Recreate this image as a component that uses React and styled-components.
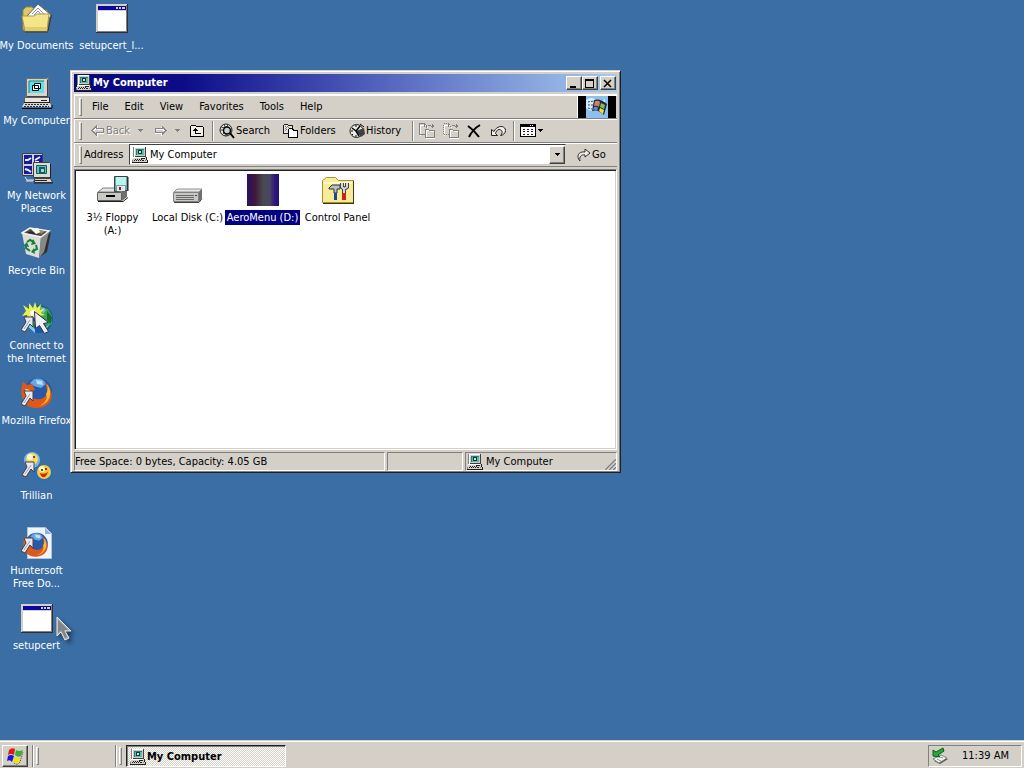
import React from "react";
import styled, { createGlobalStyle, css } from "styled-components";

const GlobalStyle = createGlobalStyle`
  * {
    box-sizing: border-box;
  }

  body {
    margin: 0;
    background: #3a6ea5;
  }

  body, button, select {
    font-family: "DejaVu Sans Condensed", "Noto Sans", sans-serif;
    font-size: 11px;
    line-height: 13px;
    color: #000;
  }

  button, select {
    margin: 0;
    padding: 0;
    border: 0;
    border-radius: 0;
    background: none;
  }

  svg {
    display: block;
    flex: none;
  }
`;

const raised = css`
  border: 1px solid;
  border-color: #fff #404040 #404040 #fff;
  box-shadow: inset -1px -1px 0 #808080;
  background: #d4d0c8;
`;

const sunken = css`
  border: 1px solid;
  border-color: #808080 #fff #fff #808080;
`;

/* ---------- desktop ---------- */

const Screen = styled.div`
  display: flex;
  flex-direction: column;
  height: 100vh;
  overflow: hidden;
`;

const Desktop = styled.main`
  position: relative;
  flex: 1;
  min-height: 0;
  background: #3a6ea5;
`;

const IconGrid = styled.div`
  display: grid;
  height: 100%;
  grid-template-rows: repeat(auto-fill, 75px);
  grid-auto-columns: 75px;
  grid-auto-flow: column;
  margin-left: -1px;
`;

const Shortcut = styled.button`
  display: flex;
  flex-direction: column;
  align-items: center;
  gap: 4px;
  padding-top: 2px;
`;

const Caption = styled.span`
  padding: 1px 2px;
  white-space: pre;
  text-align: center;
  color: ${(p) => (p.$light || p.$selected ? "#fff" : "#000")};
  background: ${(p) => (p.$selected ? "#000080" : "transparent")};
`;

const Pointer = styled.div`
  position: absolute;
  left: 56px;
  top: 616px;
  filter: drop-shadow(3px 3px 2px rgba(0, 0, 0, 0.45));
`;

/* ---------- window ---------- */

const Window = styled.section`
  position: absolute;
  inset: 70px 403px 267px 70px;
  display: flex;
  flex-direction: column;
  padding: 3px 3px 1px;
  border: 1px solid;
  border-color: #d4d0c8 #202020 #202020 #d4d0c8;
  box-shadow: inset 1px 1px 0 #fff, inset -1px -1px 0 #808080;
  background: #d4d0c8;
`;

const TitleBar = styled.header`
  display: flex;
  align-items: center;
  height: 18px;
  padding: 0 1px 0 2px;
  color: #fff;
  background: linear-gradient(to right, #08087c, #0c0c88 20%, #5060bc 55%, #a6caf0);
`;

const Title = styled.h1`
  flex: 1;
  margin: 0 0 0 1px;
  font: bold 11px/14px "DejaVu Sans Condensed", "Noto Sans", sans-serif;
`;

const CaptionButton = styled.button`
  ${raised}
  display: grid;
  place-items: center;
  width: 16px;
  height: 14px;
  margin-left: ${(p) => (p.$apart ? "2px" : "0")};
`;

const Rebar = styled.div`
  margin: 2px 0;
  border-top: 1px solid #fff;
`;

const Band = styled.div`
  display: flex;
  align-items: center;
  height: 24px;
  padding-left: 5px;
  border-bottom: 1px solid #808080;
  box-shadow: inset 1px 1px 0 #fff;
`;

const Grip = styled.span`
  flex: none;
  width: 3px;
  height: 18px;
  border: 1px solid;
  border-color: #fff #808080 #808080 #fff;
`;

const MenuBar = styled.nav`
  display: flex;
  flex: 1;
  padding-left: 2px;
`;

const MenuItem = styled.button`
  padding: 2px 8px;
`;

const Throbber = styled.div`
  display: flex;
  justify-content: center;
  width: 39px;
  height: 22px;
  margin-right: 1px;
  border-left: 1px solid #fff;
  background: #000;
`;

const ToolStrip = styled.div`
  display: flex;
  align-items: center;
  padding-left: 5px;
`;

const ToolButton = styled.button`
  display: flex;
  align-items: center;
  gap: 1px;
  height: 20px;
  min-width: ${(p) => p.$width}px;
  padding-left: 4px;
  white-space: nowrap;
  color: ${(p) => (p.disabled ? "#808080" : "#000")};
  text-shadow: ${(p) => (p.disabled ? "1px 1px 0 #fff" : "none")};
`;

const Divider = styled.span`
  width: 2px;
  height: 20px;
  margin-right: 1px;
  border-left: 1px solid #808080;
  border-right: 1px solid #fff;
`;

const AddressLabel = styled.label`
  width: 47px;
  padding-left: 2px;
`;

const Combo = styled.div`
  display: grid;
  flex: 1;
  align-items: center;
  height: 21px;
  border: 1px solid;
  border-color: #404040 #d4d0c8 #d4d0c8 #404040;
  background: #fff;

  > * {
    grid-area: 1 / 1;
  }

  > svg {
    margin-left: 2px;
    pointer-events: none;
  }
`;

const AddressSelect = styled.select`
  width: 100%;
  height: 100%;
  padding-left: 20px;
  appearance: none;
`;

const ComboArrow = styled.span`
  ${raised}
  display: grid;
  place-items: center;
  justify-self: end;
  width: 16px;
  height: 18px;
  pointer-events: none;
`;

const GoButton = styled.button`
  display: flex;
  align-items: center;
  gap: 1px;
  width: 51px;
  padding-left: 11px;
`;

const FileArea = styled.div`
  display: flex;
  flex: 1;
  flex-wrap: wrap;
  align-content: flex-start;
  min-height: 0;
  border: 1px solid;
  border-color: #808080 #fff #fff #808080;
  box-shadow: inset 1px 1px 0 #202020, inset -1px -1px 0 #d4d0c8;
  background: #fff;
`;

const FileItem = styled.button`
  display: flex;
  flex-direction: column;
  align-items: center;
  gap: 4px;
  width: 75px;
  padding-top: 4px;
`;

const StatusBar = styled.footer`
  display: grid;
  grid-template-columns: 1fr 76px 152px;
  gap: 2px;
  height: 19px;
  margin-top: 2px;
`;

const StatusCell = styled.div`
  ${sunken}
  display: flex;
  align-items: center;
  gap: 3px;
  overflow: hidden;
  white-space: nowrap;

  > svg:first-child {
    margin-left: 1px;
  }

  > svg:last-child {
    margin-left: auto;
    align-self: flex-end;
  }
`;

/* ---------- taskbar ---------- */

const Taskbar = styled.footer`
  display: flex;
  align-items: center;
  height: 28px;
  padding: 3px 2px 1px;
  border-top: 1px solid #d4d0c8;
  box-shadow: inset 0 1px 0 #fff;
  background: #d4d0c8;
`;

const StartButton = styled.button`
  ${raised}
  display: grid;
  place-items: center;
  width: 26px;
  height: 22px;
`;

const QuickLaunch = styled.div`
  display: flex;
  align-items: center;
  gap: 2px;
  width: 87px;
  padding-left: 4px;
`;

const TaskList = styled.div`
  display: flex;
  flex: 1;
  align-items: center;
  gap: 2px;
`;

const Groove = styled.span`
  width: 2px;
  height: 22px;
  border-left: 1px solid #808080;
  border-right: 1px solid #fff;
`;

const TaskButton = styled.button`
  display: flex;
  align-items: center;
  gap: 1px;
  width: 160px;
  height: 22px;
  margin-left: 2px;
  padding: 2px 3px 0;
  border: 1px solid;
  border-color: #202020 #fff #fff #202020;
  box-shadow: inset 1px 1px 0 #808080;
  background: repeating-conic-gradient(#fff 0 25%, #d4d0c8 0 50%) 0 0 / 2px 2px;
  font-weight: bold;
`;

const Tray = styled.div`
  ${sunken}
  display: flex;
  align-items: center;
  justify-content: space-between;
  width: 94px;
  height: 22px;
  padding: 0 12px 0 2px;
`;

/* ---------- small icons ---------- */

const Icon = ({ w = 16, h = 16, children }) => (
  <svg
    width={w}
    height={h}
    viewBox={`0 0 ${w} ${h}`}
    shapeRendering="crispEdges"
    fill="none"
    aria-hidden="true"
  >
    {children}
  </svg>
);

const SmallPc = () => (
  <Icon>
    <path fill="#c8ccc8" d="M2 0h11v10H2z" />
    <path fill="#808080" d="M1 0h1v10H1z" />
    <path fill="#fff" d="M2 0h11v1H2zM2 1h1v9H2z" />
    <path fill="#404040" d="M13 0h1v10h-1zM3 9h10v1H3z" />
    <path fill="#58c0a8" d="M4 2h8v6H4z" />
    <path fill="#387870" d="M4 2h8v1H4zM4 2h1v6H4z" />
    <path fill="#103830" d="M6 3h4v4H6z" />
    <path fill="#a8f0e0" d="M7 4h2v2H7z" />
    <path fill="#d4d0c8" d="M1 10h13v3H1zM0 12h15v3H0z" />
    <path fill="#fff" d="M1 10h12v1H1z" />
    <path
      fill="#202020"
      d="M14 10h1v3h-1zM9 11h4v1H9zM2 13h1v1H2zM4 13h1v1H4zM6 13h1v1H6zM8 13h1v1H8zM10 13h2v1h-2zM3 12h1v1H3zM5 12h1v1H5zM7 12h1v1H7zM9 12h1v1H9zM0 15h16v1H0zM15 13h1v2h-1z"
    />
    <path fill="#808080" d="M0 13h1v2H0zM13 13h1v1h-1z" />
  </Icon>
);

const Caret = ({ color = "#000" }) => (
  <Icon w={7} h={4}>
    <path fill={color} d="M1 0h5v1H1zM2 1h3v1H2zM3 2h1v1H3z" />
  </Icon>
);

const Arrow = ({ flip }) => (
  <Icon w={14} h={12}>
    <g transform={flip ? "translate(13 0) scale(-1 1)" : undefined}>
      <path stroke="#fff" d="M2 6.500l4-4v2h6v4H6v2z" />
      <path stroke="#858585" d="M1 5.500l4-4v2h7v4H5v2z" />
    </g>
  </Icon>
);

const UpFolder = () => (
  <Icon>
    <path stroke="#000" fill="#f0eee8" d="M1.500 13.500h13v-9l-1-1h-6l-1-1h-4l-1 1z" />
    <path fill="#000" d="M6 5h1v5H6zM5 6h3v1H5zM4 7h5v1H4zM6 10h6v1H6z" />
  </Icon>
);

const SearchIcon = () => (
  <svg width="16" height="16" viewBox="0 0 16 16" fill="none" aria-hidden="true">
    <circle cx="7" cy="7" r="6" stroke="#202020" fill="#e4e2dc" />
    <path d="M1 7h4M2 4l4 1M5 1l1 3M9 1L8 4M3 12l3-3M7 13v-2" stroke="#404040" />
    <circle cx="8" cy="7.500" r="3.500" stroke="#000" strokeWidth="1.500" fill="#c8d0d0" />
    <path d="M11 10l4 5" stroke="#000" strokeWidth="2" />
  </svg>
);

const FoldersIcon = () => (
  <Icon>
    <path stroke="#202020" fill="#e4e2dc" d="M.5 10.500v-8l1-1h3l1 1h4v8z" />
    <path stroke="#000" fill="#fff" d="M5.500 14.500v-8l1-1h3l1 2h4v7z" />
    <path
      fill="#808080"
      d="M2 3h1v1H2zM4 3h1v1H4zM3 4h1v1H3zM5 4h1v1H5zM2 5h1v1H2zM3 6h1v1H3zM2 7h1v1H2z"
    />
  </Icon>
);

const HistoryIcon = () => (
  <svg width="16" height="16" viewBox="0 0 16 16" fill="none" aria-hidden="true">
    <circle cx="7.500" cy="8" r="6.500" fill="#ecece8" stroke="#202020" />
    <path d="M7 8l8-3 1 6-4 3z" fill="#404040" />
    <path d="M7 8l4-5M7 8L3 5M7 8l3 5" stroke="#000" strokeWidth="1.500" />
    <path d="M7 2v2M2 8h2M7 12v2M3 12l1-1" stroke="#000" />
    <path d="M11 1l4 3" stroke="#000" />
  </svg>
);

const MoveTo = ({ copy }) => (
  <Icon>
    <path stroke="#fff" d="M1.500 12.500v-10h5l3 3M7.500 15.500v-8h3l1 1h5v7z" />
    <path
      stroke="#808080"
      strokeDasharray={copy ? "1 1" : undefined}
      d="M5.500 11.500h-5v-11h5l2 2v2"
    />
    <path stroke="#808080" d="M6.500 14.500v-8h3l1 1h5v7z" />
    <path fill="#808080" d="M9 2h3v1H9zM14 2h1v1h-1zM13 1h1v4h-1zM12 3h3v1h-3zM5 1h1v3H5z" />
  </Icon>
);

const DeleteIcon = () => (
  <svg width="15" height="14" viewBox="0 0 15 14" aria-hidden="true">
    <path d="M1 2q6 4 11 11M13 1Q6 5 2 13" fill="none" stroke="#000" strokeWidth="2" />
  </svg>
);

const UndoIcon = () => (
  <svg width="16" height="14" viewBox="0 0 16 14" fill="none" aria-hidden="true">
    <path
      d="M.5 5.500v6h6l-2-2c1-4 4-5 6-3 1 1 1 3-1 5 2 0 5-2 5-5 0-5-8-6-11.500 1z"
      fill="#f2f0ec"
      stroke="#202020"
    />
  </svg>
);

const ViewsIcon = () => (
  <Icon>
    <path stroke="#000" fill="#fff" d="M.5 1.500h15v12H.5z" />
    <path fill="#000" d="M1 2h14v2H1z" />
    <path
      fill="#202020"
      d="M3 6h2v1H3zM7 6h2v1H7zM11 6h2v1h-2zM3 8h2v1H3zM7 8h2v1H7zM11 8h2v1h-2zM3 11h2v1H3zM7 11h2v1H7zM11 11h2v1h-2z"
    />
    <path fill="#fff" d="M10 2h1v1h-1zM12 2h1v1h-1z" />
  </Icon>
);

const GoIcon = () => (
  <svg width="14" height="14" viewBox="0 0 14 14" aria-hidden="true">
    <path
      d="M3 13C-1 9 1 3 8 4V1l5 4-5 4V7C4 6 2 9 3 13z"
      fill="#f0eeea"
      stroke="#303030"
    />
  </svg>
);

const WindowsFlag = () => (
  <svg width="18" height="18" viewBox="0 0 18 18" aria-hidden="true">
    <path fill="#e01818" d="M3 3q3-3 6-1L8 8Q5 6 2 8z" />
    <path fill="#38b038" d="M10 3q3 2 7 0l-2 6q-3 2-6-1z" />
    <path fill="#1818d8" d="M2 9q3-2 6 0l-2 6q-2-3-5-1z" />
    <path fill="#f0e010" d="M9 10q3 2 6 0l-2 5q-3 3-6 0z" />
    <path fill="none" stroke="#404040" strokeDasharray="1 1" d="M8 16q3 3 6-1l3-10" />
  </svg>
);

const ThrobberFlag = () => (
  <svg width="22" height="22" viewBox="0 0 22 22" aria-hidden="true">
    <path fill="#8cc0ee" d="M0 0h22v22H0z" />
    <path fill="#d8ecfa" d="M0 4q6-4 10 0t9-1v6q-7 3-11 5T0 12z" />
    <path fill="#202838" d="M8 4q6-2 13 4l-3 11q-6-6-12-4z" />
    <path fill="#d08068" d="M9 5q4-1 5 1l-1 5q-2-2-5-1z" />
    <path fill="#88bc58" d="M15 7l4 2-1 4-4-2z" />
    <path fill="#6088d8" d="M8 11q3-1 4 1l-1 3q-2-2-4-1z" />
    <path fill="#f0e030" d="M14 12l4 2-1 4-4-3z" />
    <path stroke="#404858" strokeDasharray="2 1" d="M2 6l6-1M2 9l5 0M2 12l4 1" />
  </svg>
);

const SizeGrip = () => (
  <svg width="12" height="12" viewBox="0 0 12 12" aria-hidden="true">
    <path stroke="#fff" d="M0 12L12 0M4 12l8-8M8 12l4-4" />
    <path stroke="#808080" strokeWidth="1.500" d="M1 12L12 1M5 12l7-7M9 12l3-3" />
  </svg>
);

const TrayIcon = () => (
  <svg width="18" height="18" viewBox="0 0 18 18" aria-hidden="true">
    <path fill="#505050" d="M3 14l8-4 6 2-8 5z" />
    <path fill="#f4f4f4" stroke="#808080" d="M2 12l8-4 6 3-8 5z" />
    <path stroke="#909090" d="M6 12l4 2M9 10l3 1" />
    <path fill="#28a838" stroke="#086018" d="M12 1L5 5 2 3v6l7 1-2-2 6-4z" />
  </svg>
);

/* ---------- large icons ---------- */

const Large = ({ children, crisp }) => (
  <svg
    width="32"
    height="32"
    viewBox="0 0 32 32"
    fill="none"
    shapeRendering={crisp ? "crispEdges" : undefined}
    aria-hidden="true"
  >
    {children}
  </svg>
);

const DocumentsIcon = () => (
  <Large>
    <path fill="#e0c868" stroke="#a08830" d="M2 28V8l3-3h6l3 3h12v20z" />
    <path fill="#fff" stroke="#606060" d="M6 14L17 2l13 11-4 8H10z" />
    <path stroke="#7890b8" d="M11 12l6-6 8 8M13 13l4-4 5 6" />
    <path fill="#f4e48c" stroke="#b09840" d="M1 14h12l3-2h12l-2 17H4z" />
    <path fill="#e4cc68" d="M4 25h22v4H4z" />
    <path stroke="#403818" d="M4 30h23M30.500 13L27 29" />
  </Large>
);

const AppWindowIcon = () => (
  <Large crisp>
    <path fill="#d4d0c8" d="M0 2h32v28H0z" />
    <path fill="#303030" d="M31 2h1v29h-1zM0 30h32v1H0z" />
    <path fill="#808080" d="M30 3h1v27h-1zM1 29h30v1H1z" />
    <path fill="#0808a0" d="M2 4h28v4H2z" />
    <path fill="#d4d0c8" d="M20 5h2v2h-2zM23 5h2v2h-2zM26 5h3v2h-3z" />
    <path fill="#fff" d="M2 9h28v20H2z" />
  </Large>
);

const ComputerIcon = () => (
  <Large>
    <path fill="#d8d4cc" stroke="#707070" d="M5.500 1.500h20l2-1v18l-2 1h-20z" />
    <path fill="#404040" d="M26 2l1 1v17H6v-1h20z" />
    <path fill="#60e0e8" d="M8 4h15v12H8z" />
    <path stroke="#108088" d="M8 16V4h15" />
    <path fill="#e8ffff" stroke="#000" d="M13.500 6.500h6v5h-6zM11.500 8.500h6v5h-6z" />
    <path fill="#e8e4dc" stroke="#606060" d="M3.500 20.500h25v5h-25z" />
    <path stroke="#202020" d="M20 23.500h6M28.500 20v6M3 25.500h26" />
    <path fill="#d8d4cc" d="M3 26h26l2 4H1z" />
    <path stroke="#303030" strokeDasharray="2 1" d="M4 27.500h24M3 29.500h25" />
    <path stroke="#000" d="M1 31.500h30M31 28v3" />
  </Large>
);

const NetworkIcon = () => (
  <Large>
    <path fill="#d0d0d0" stroke="#404040" d="M1.500 1.500h20v22h-20z" />
    <path fill="#1818a0" d="M3 3h8v9H3zM13 3h8v9h-8zM3 14h8v8H3zM13 14h8v8h-8z" />
    <path stroke="#e8f0ff" strokeWidth="2" d="M4 8h3l3-2M14 8l5-3M14 10h4M4 17l3 1 3 2" />
    <path fill="#e0dcd4" stroke="#404040" d="M12.500 10.500h16l1 1v14h-17z" />
    <path fill="#60c0b8" stroke="#106060" d="M15.500 13.500h10v8h-10z" />
    <path fill="#205860" d="M18 15h6v6h-6z" />
    <path fill="#88e0d8" d="M20 17h3v3h-3z" />
    <path fill="#d8d4cc" stroke="#404040" d="M13.500 26.500h16l2 4h-18z" />
    <path stroke="#202020" d="M14 28.500h12M29.500 12v14M13 31h19" />
    <path stroke="#e8e8e8" d="M4 25l2 3h7M5 29h7" />
  </Large>
);

const RecycleIcon = () => (
  <Large>
    <path fill="#303030" d="M17 31l9-6 4-20-5 4z" />
    <path fill="#dcdcd8" d="M1 6l19 4-2 21-13-4z" />
    <path fill="#888884" d="M20 10l8-5-5 20-5 6z" />
    <path fill="#585048" stroke="#f4f4f4" strokeWidth="1.500" d="M1 6l8-5 19 3-8 6z" />
    <path fill="#302820" d="M6 6l4-2 8 4z" />
    <path fill="#f8f8f8" d="M10 2l7-1 3 4-5 2z" />
    <path fill="#b08868" d="M18 3l6 1-4 3z" />
    <path stroke="#188038" strokeWidth="2" d="M6 15l3-2 4 2M15 18l1 4-4 2M9 24l-4-3v-3" />
    <path fill="#188038" d="M12 12l3 5-5 1zM13 21l-3 4 4 2zM2 19l4-4 2 5z" />
  </Large>
);

const ShortcutArrow = ({ x = 0, y = 0 }) => (
  <g transform={`translate(${x} ${y})`}>
    <path fill="#e8e8ec" stroke="#404048" d="M4 2h9v10l-3-3-5 8-4-2 5-8z" />
    <path stroke="#a0a0b8" d="M4 14l6-9" />
  </g>
);

const InternetIcon = () => (
  <Large>
    <circle cx="18" cy="17" r="14" fill="#1858a8" />
    <path fill="#38a850" d="M19 4l8 3 4 7v8l-5 3-4-6-3-7zM5 14l9 6-2 9-7-7z" />
    <path fill="#186830" d="M26 9l5 6-1 7-4-4z" />
    <path fill="#88c8f0" d="M8 22l6 5v4l-7-6zM23 26l5-3-4 6z" />
    <path fill="#70c0e8" d="M20 5l5 3-3 4z" />
    <path
      fill="#e8f050"
      d="M2 3l6 4V1l4 5 2-6 2 6 4-4-1 6 5-2-4 5 4 2-6 1-2 4-5-4-4 4-1-5-5 1 4-5z"
    />
    <path fill="#fff" d="M9 9l5-1 2 5-6 1z" />
    <path fill="#f0f0f4" stroke="#303040" d="M13.500 9.500l1 17 4-3 5 8 4-2-5-8 5-1z" />
    <ShortcutArrow x={-1} y={13} />
  </Large>
);

const Fox = ({ small }) => (
  <g transform={small ? "translate(2 5) scale(0.8)" : undefined}>
    <circle cx="17" cy="15" r="14" fill="#2858a8" />
    <path fill="#68a8e0" d="M13 2q9-2 12 5l-5 4-7-2-4-3z" />
    <path fill="#b8e0f8" d="M15 3l6 1 1 4-6-1z" />
    <path
      fill="#e05818"
      d="M2 5l4 3 5-1 3 6-5 3c1 7 12 9 16 2 2-4 1-8-2-13 12 8 10 25-6 26C4 32-3 20 2 5z"
    />
    <path fill="#f8b838" d="M26 7c7 9 2 21-9 22 7-2 10-8 8-12 2-3 2-6 1-10z" />
    <path fill="#fff0c0" d="M4 12l5 1-2 4z" />
  </g>
);

const FirefoxIcon = () => (
  <Large>
    <Fox />
    <ShortcutArrow x={-1} y={12} />
  </Large>
);

const TrillianIcon = () => (
  <Large>
    <ellipse cx="22" cy="21" rx="10" ry="8" fill="#2870b8" />
    <circle cx="11" cy="8" r="8" fill="#78b8e8" />
    <circle cx="11" cy="7" r="6" fill="#f8d860" />
    <circle cx="9" cy="5" r="3" fill="#fff8c8" />
    <circle cx="23" cy="20" r="7" fill="#fcc838" />
    <circle cx="21" cy="17" r="3" fill="#fff4b0" />
    <path fill="#d02818" d="M19 21q4 2 8-1-2 6-5 5-2 0-3-4z" />
    <path stroke="#302008" strokeWidth="1.500" d="M21 17v2M25 16v2M13 4v2" />
    <ShortcutArrow y={8} />
  </Large>
);

const FoxDocIcon = () => (
  <Large>
    <path fill="#eef4fc" stroke="#b0c4dc" d="M6.500.5h18l6 6v25h-24z" />
    <path fill="#90b0d8" d="M24 1l6 6h-6z" />
    <Fox small />
    <ShortcutArrow x={-1} y={9} />
  </Large>
);

const FloppyIcon = () => (
  <Large>
    <path fill="#e4e4e0" stroke="#808080" d="M1 18l5-4h23l-4 4z" />
    <path fill="#c8c8c4" stroke="#606060" d="M.5 18.500h24v8H.5z" />
    <path fill="#707070" d="M25 18l5-4v9l-5 4z" />
    <path stroke="#000" strokeWidth="2" d="M9 22h9" />
    <path stroke="#202020" d="M1 27.500h25l5-4" />
    <path fill="#68a8a8" stroke="#404040" d="M17.500 2.500h13v14l-13 1z" />
    <path fill="#b8f4f0" d="M19 3h10v8H19z" />
    <path fill="#e8e8e8" d="M20 12h8v5h-8z" />
    <path fill="#802020" d="M22 13h2v3h-2z" />
    <path stroke="#202020" d="M31 3v14" />
  </Large>
);

const DiskIcon = () => (
  <Large>
    <path fill="#e8e8e4" stroke="#909090" d="M2 18l3-3h25l-3 3z" />
    <path fill="#c8c8c4" stroke="#808080" d="M1.500 18.500h25v9h-25z" />
    <path fill="#707070" d="M27 18l3-3v9l-3 4z" />
    <path stroke="#686868" d="M4 21.500h18M4 23.500h18M4 25.500h18" />
    <path stroke="#404040" d="M2 28.500h25l3-4" />
    <path fill="#404040" d="M23 21h2v1h-2z" />
  </Large>
);

const AeroIcon = () => (
  <Large>
    <defs>
      <linearGradient id="aero">
        <stop offset="0" stopColor="#281068" />
        <stop offset="0.25" stopColor="#401838" />
        <stop offset="0.5" stopColor="#484850" />
        <stop offset="0.7" stopColor="#484860" />
        <stop offset="0.85" stopColor="#381878" />
        <stop offset="1" stopColor="#181080" />
      </linearGradient>
    </defs>
    <path fill="url(#aero)" d="M0 0h32v32H0z" />
  </Large>
);

const ControlIcon = () => (
  <Large>
    <path fill="#f8ec98" stroke="#a89028" d="M.5 28.500v-22l4-3h9l3 3h15v22z" />
    <path fill="#fff8c8" d="M2 8h28v2H2z" />
    <path stroke="#403810" d="M1 29.500h31M31.500 7v22" />
    <path fill="#b8c0c8" stroke="#303030" d="M7 14l3-3h8v4h-3v4h-3v-4H7z" />
    <path fill="#184898" d="M12 19h3v7h-3z" />
    <path stroke="#404448" strokeWidth="4" d="M20 9v4l2 2v4M25 9v4l-3 2" />
    <path stroke="#d0d8e0" strokeWidth="2" d="M20 9v4l2 2v4M25 9v4l-3 2" />
    <path fill="#d82010" d="M20 19h4v7h-4z" />
  </Large>
);

/* ---------- data ---------- */

const shortcuts = [
  { label: "My Documents", icon: DocumentsIcon },
  { label: "My Computer", icon: ComputerIcon },
  { label: "My Network\nPlaces", icon: NetworkIcon },
  { label: "Recycle Bin", icon: RecycleIcon },
  { label: "Connect to\nthe Internet", icon: InternetIcon },
  { label: "Mozilla Firefox", icon: FirefoxIcon },
  { label: "Trillian", icon: TrillianIcon },
  { label: "Huntersoft\nFree Do...", icon: FoxDocIcon },
  { label: "setupcert", icon: AppWindowIcon },
  { label: "setupcert_l...", icon: AppWindowIcon },
];

const menus = ["File", "Edit", "View", "Favorites", "Tools", "Help"];

const drives = [
  { label: "3½ Floppy\n(A:)", icon: FloppyIcon },
  { label: "Local Disk (C:)", icon: DiskIcon },
  { label: "AeroMenu (D:)", icon: AeroIcon, selected: true },
  { label: "Control Panel", icon: ControlIcon },
];

const StandardButtons = () => (
  <ToolStrip>
    <ToolButton $width={46} disabled>
      <Arrow /> Back
    </ToolButton>
    <ToolButton $width={17} disabled aria-label="Back history">
      <Caret color="#808080" />
    </ToolButton>
    <ToolButton $width={20} disabled aria-label="Forward">
      <Arrow flip />
    </ToolButton>
    <ToolButton $width={15} disabled aria-label="Forward history">
      <Caret color="#808080" />
    </ToolButton>
    <ToolButton $width={27} aria-label="Up">
      <UpFolder />
    </ToolButton>
    <Divider />
    <ToolButton $width={64}>
      <SearchIcon /> Search
    </ToolButton>
    <ToolButton $width={66}>
      <FoldersIcon /> Folders
    </ToolButton>
    <ToolButton $width={67}>
      <HistoryIcon /> History
    </ToolButton>
    <Divider />
    <ToolButton $width={24} disabled aria-label="Move To">
      <MoveTo />
    </ToolButton>
    <ToolButton $width={24} disabled aria-label="Copy To">
      <MoveTo copy />
    </ToolButton>
    <ToolButton $width={24} aria-label="Delete">
      <DeleteIcon />
    </ToolButton>
    <ToolButton $width={26} aria-label="Undo">
      <UndoIcon />
    </ToolButton>
    <Divider />
    <ToolButton $width={30} aria-label="Views">
      <ViewsIcon />
      <Caret />
    </ToolButton>
  </ToolStrip>
);

const ExplorerWindow = () => (
  <Window>
    <TitleBar>
      <SmallPc />
      <Title>My Computer</Title>
      <CaptionButton aria-label="Minimize">
        <Icon w={10} h={9}>
          <path fill="#000" d="M1 7h6v2H1z" />
        </Icon>
      </CaptionButton>
      <CaptionButton aria-label="Maximize">
        <Icon w={10} h={9}>
          <path fill="#000" d="M0 0h9v2H0zM0 2h1v7H0zM8 2h1v7H8zM1 8h7v1H1z" />
        </Icon>
      </CaptionButton>
      <CaptionButton $apart aria-label="Close">
        <svg width="10" height="9" viewBox="0 0 10 9" aria-hidden="true">
          <path stroke="#000" strokeWidth="1.500" d="M1 1l7 7M8 1L1 8" />
        </svg>
      </CaptionButton>
    </TitleBar>
    <Rebar>
      <Band>
        <Grip />
        <MenuBar>
          {menus.map((menu) => (
            <MenuItem key={menu}>{menu}</MenuItem>
          ))}
        </MenuBar>
        <Throbber>
          <ThrobberFlag />
        </Throbber>
      </Band>
      <Band>
        <Grip />
        <StandardButtons />
      </Band>
      <Band>
        <Grip />
        <AddressLabel htmlFor="address">Address</AddressLabel>
        <Combo>
          <AddressSelect id="address">
            <option>My Computer</option>
          </AddressSelect>
          <SmallPc />
          <ComboArrow>
            <Caret />
          </ComboArrow>
        </Combo>
        <GoButton>
          <GoIcon /> Go
        </GoButton>
      </Band>
    </Rebar>
    <FileArea>
      {drives.map(({ label, icon: Picture, selected }) => (
        <FileItem key={label}>
          <Picture />
          <Caption $selected={selected}>{label}</Caption>
        </FileItem>
      ))}
    </FileArea>
    <StatusBar>
      <StatusCell>Free Space: 0 bytes, Capacity: 4.05 GB</StatusCell>
      <StatusCell />
      <StatusCell>
        <SmallPc />
        My Computer
        <SizeGrip />
      </StatusCell>
    </StatusBar>
  </Window>
);

const App = () => (
  <Screen>
    <GlobalStyle />
    <Desktop>
      <IconGrid>
        {shortcuts.map(({ label, icon: Picture }) => (
          <Shortcut key={label}>
            <Picture />
            <Caption $light>{label}</Caption>
          </Shortcut>
        ))}
      </IconGrid>
      <ExplorerWindow />
      <Pointer>
        <svg width="17" height="26" viewBox="0 0 17 26" aria-hidden="true">
          <path fill="#a8a8a8" stroke="#e8e8e8" d="M1 1v19l4-4 4 8 4-2-4-7h6z" />
          <path fill="#606060" d="M2 4l10 10H8l3 7-2 1-4-8-3 3z" opacity="0.5" />
        </svg>
      </Pointer>
    </Desktop>
    <Taskbar>
      <StartButton aria-label="Start">
        <WindowsFlag />
      </StartButton>
      <QuickLaunch>
        <Groove />
        <Grip />
      </QuickLaunch>
      <TaskList>
        <Groove />
        <Grip />
        <TaskButton>
          <SmallPc />
          My Computer
        </TaskButton>
      </TaskList>
      <Tray>
        <TrayIcon />
        <time>11:39 AM</time>
      </Tray>
    </Taskbar>
  </Screen>
);

export default App;
